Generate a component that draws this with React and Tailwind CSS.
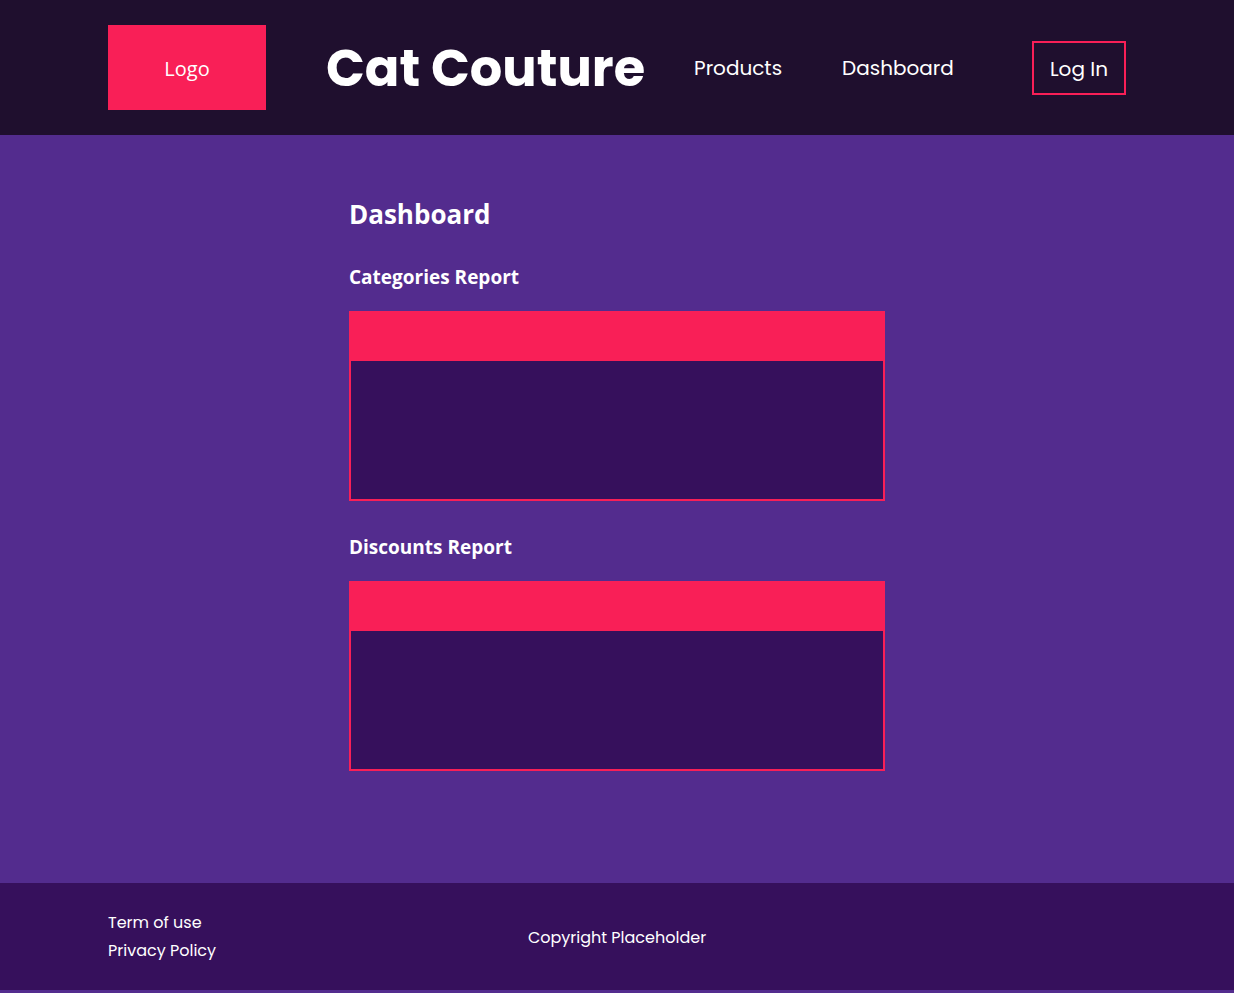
const reports = ['Categories Report', 'Discounts Report'];

function Header() {
  return (
    <header className="flex items-center bg-[#1f0f2e] px-[108px] py-[25px] font-['Poppins','Inter',sans-serif]">
      <a
        href="#home"
        className="flex h-[85px] w-[158px] shrink-0 items-center justify-center bg-[#f91f57] pt-0.5 font-['Open_Sans',sans-serif] text-[20px]"
      >
        Logo
      </a>
      <h1 className="ml-[60px] text-[51px] leading-[64px] font-bold whitespace-nowrap">Cat Couture</h1>
      <nav aria-label="Main" className="ml-[49px] flex gap-[60px] text-[20px]">
        <a href="#products">Products</a>
        <a href="#dashboard">Dashboard</a>
      </nav>
      <button
        type="button"
        className="ml-auto h-[54px] w-[94px] shrink-0 border-2 border-[#f91f57] pt-0.5 text-[20px]"
      >
        Log In
      </button>
    </header>
  );
}

function Report({ title }) {
  return (
    <section className="mb-[30px]">
      <h3 className="mb-[18px] text-[19px] leading-8 font-bold">{title}</h3>
      <div className="border-2 border-[#f91f57] bg-[#36105c]">
        <div className="h-12 bg-[#f91f57]" />
        <div className="h-[138px]" />
      </div>
    </section>
  );
}

function Footer() {
  return (
    <footer className="grid grid-cols-[1fr_auto_1fr] items-center bg-[#36105c] px-[108px] pt-[26px] pb-[25px] font-['Poppins','Inter',sans-serif] text-[16px]">
      <ul className="leading-7">
        <li>
          <a href="#terms">Term of use</a>
        </li>
        <li>
          <a href="#privacy">Privacy Policy</a>
        </li>
      </ul>
      <p className="pt-0.5">Copyright Placeholder</p>
    </footer>
  );
}

export default function App() {
  return (
    <div className="min-h-screen bg-[#532c8e] font-['Open_Sans',sans-serif] text-white">
      <Header />
      <main className="mx-auto max-w-[536px] pt-[59px] pb-[82px]">
        <h2 className="mb-[27px] text-[26px] leading-[40px] font-bold">Dashboard</h2>
        {reports.map((title) => (
          <Report key={title} title={title} />
        ))}
      </main>
      <Footer />
    </div>
  );
}
